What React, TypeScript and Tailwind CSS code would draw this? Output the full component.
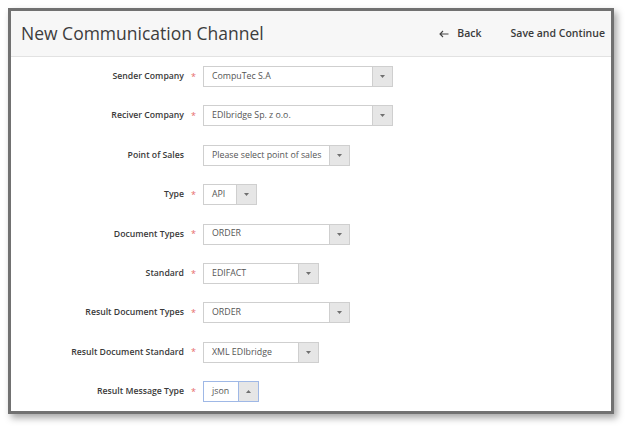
import React from 'react';

type Field = {
  label: string;
  value: string;
  width: number;
  required?: boolean;
  open?: boolean;
};

const fields: Field[] = [
  { label: 'Sender Company', value: 'CompuTec S.A', width: 190, required: true },
  { label: 'Reciver Company', value: 'EDIbridge Sp. z o.o.', width: 190, required: true },
  { label: 'Point of Sales', value: 'Please select point of sales', width: 147 },
  { label: 'Type', value: 'API', width: 54, required: true },
  { label: 'Document Types', value: 'ORDER', width: 147, required: true },
  { label: 'Standard', value: 'EDIFACT', width: 116, required: true },
  { label: 'Result Document Types', value: 'ORDER', width: 147, required: true },
  { label: 'Result Document Standard', value: 'XML EDIbridge', width: 116, required: true },
  { label: 'Result Message Type', value: 'json', width: 56, required: true, open: true },
];

function Caret({ up }: { up?: boolean }) {
  return (
    <svg width="5" height="3" viewBox="0 0 5 3" className={up ? 'rotate-180' : ''}>
      <path d="M0 0 L5 0 L2.5 3 Z" fill="#707070" />
    </svg>
  );
}

function Select({ field }: { field: Field }) {
  const border = field.open ? 'border-[#9fb8e6]' : 'border-[#cfcfcf]';
  return (
    <div
      className={`flex h-[21px] border ${border} bg-white`}
      style={{ width: field.width }}
    >
      <div className="flex flex-1 items-center pl-[8px] text-[8.8px] text-[#555] whitespace-nowrap overflow-hidden">
        {field.value}
      </div>
      <div className={`flex w-[20px] items-center justify-center border-l ${border} bg-[#e6e6e6]`}>
        <Caret up={field.open} />
      </div>
    </div>
  );
}

export default function App() {
  return (
    <div className="w-[630px] h-[430px] bg-white pt-[8px] pl-[8px]" style={{ fontFamily: '"Open Sans", "Liberation Sans", sans-serif' }}>
      <div className="w-[606px] h-[406px] border-[3px] border-[#717171] bg-white shadow-[3px_4px_7px_rgba(0,0,0,0.35)] flex flex-col overflow-hidden">
        <div className="h-[46px] flex items-center justify-between bg-[#f7f7f7] border-b border-[#e2e2e2] pl-[10px] pr-[6px]">
          <h1 className="text-[17.5px] text-[#3d3d3d] font-normal">New Communication Channel</h1>
          <div className="flex items-center gap-[29px] text-[10.5px] text-[#3b3b3b] font-semibold">
            <button className="flex items-center gap-[8px]">
              <svg width="10" height="8" viewBox="0 0 10 8" fill="none" stroke="#444" strokeWidth="1.1">
                <path d="M9.5 4 H1 M4 1 L1 4 L4 7" />
              </svg>
              <span>Back</span>
            </button>
            <button>Save and Continue</button>
          </div>
        </div>
        <div className="flex flex-col gap-[18.4px] pt-[9px]">
          {fields.map((f) => (
            <div key={f.label} className="flex items-center h-[21px]">
              <div className="w-[173px] text-right text-[8.7px] font-semibold text-[#3a3a3a] whitespace-nowrap">
                {f.label}
              </div>
              <div className="w-[19px] text-center text-[9px] text-[#e66a6a]">
                {f.required ? '*' : ''}
              </div>
              <Select field={f} />
            </div>
          ))}
        </div>
      </div>
    </div>
  );
}
